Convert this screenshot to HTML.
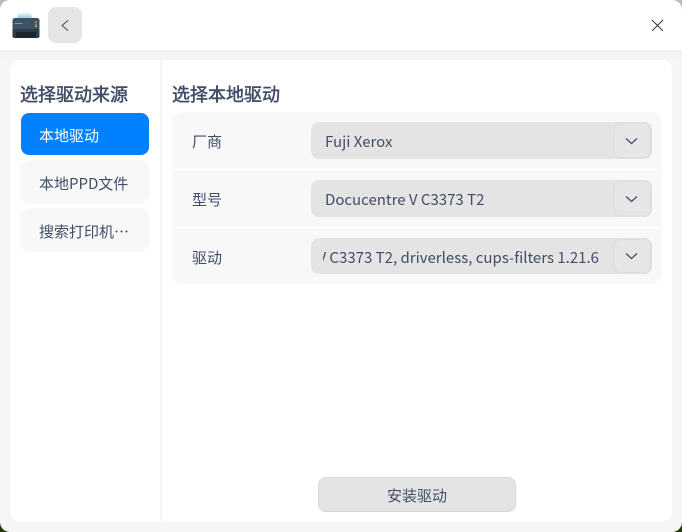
<!DOCTYPE html>
<html><head><meta charset="utf-8">
<style>
*{box-sizing:border-box;margin:0;padding:0}
html,body{width:682px;height:532px;overflow:hidden;background:#fff}
body{position:relative;font-family:"Noto Sans CJK SC","Liberation Sans",sans-serif;color:#414d68;font-size:15px}
.a{position:absolute}
.t{position:absolute;white-space:nowrap;line-height:22px}
.h{font-size:18px;line-height:24px;-webkit-text-stroke:.5px #414d68}
#win{left:0;top:0;width:682px;height:532px;border-radius:10px;background:#f6f6f6;overflow:hidden}
#bar{left:0;top:0;width:682px;height:50px;background:#fff}
#panel{left:10px;top:60px;width:662px;height:462px;border-radius:10px;background:#fff}
.combo{left:311px;width:341px;background:#e4e4e4;border-radius:8px}
.cb{left:613px;width:39px;background:#e6e6e6;border:2px solid #dfdfdf;border-radius:8px}
</style></head><body>
<div class="a" style="left:0;top:0;width:14px;height:14px;background:#b9b9b9"></div>
<div class="a" style="right:0;top:0;width:14px;height:14px;background:#b9b9b9"></div>
<div class="a" style="left:0;bottom:0;width:14px;height:14px;background:#26380c"></div>
<div class="a" style="right:0;bottom:0;width:14px;height:14px;background:#26380c"></div>
<div class="a" id="win">
  <div class="a" id="bar"></div>
  <div class="a" style="left:0;top:50px;width:682px;height:10px;background:linear-gradient(#f1f1f1,#f6f6f6)"></div>
  <div class="a" id="panel"></div>
  <div class="a" style="left:160px;top:60px;width:2px;height:462px;background:#f6f6f6"></div>

  <svg class="a" style="left:12px;top:12px" width="28" height="27" viewBox="0 0 28 27">
    <path d="M6 1h13l1 6H5z" fill="#a9d4ec"/>
    <path d="M6 1h13l.4 2.500H5.600z" fill="#dcedf6"/>
    <rect x="0.5" y="6" width="27" height="20" rx="2.500" fill="#3b5364"/>
    <rect x="0.5" y="17" width="27" height="9" rx="2" fill="#2a3d4a"/>
    <rect x="4" y="20" width="20" height="6" fill="#1a2730"/>
    <rect x="2.500" y="11" width="8" height="1" fill="#8196a3"/>
    <rect x="23" y="9" width="2" height="2" fill="#d9534f"/>
    <rect x="23" y="11.500" width="2" height="1.500" fill="#4ca64c"/>
    <rect x="23" y="13.500" width="2" height="1.500" fill="#e0b040"/>
  </svg>

  <div class="a" style="left:48px;top:7px;width:34px;height:36px;background:#e5e5e5;border-radius:8px"></div>
  <svg class="a" style="left:48px;top:8px" width="34" height="35" viewBox="0 0 34 35">
    <path d="M20 12.500L14 17.500L20 22.500" fill="none" stroke="#414d68" stroke-width="1.100"/>
  </svg>
  <svg class="a" style="left:651px;top:19px" width="13" height="13" viewBox="0 0 13 13" shape-rendering="crispEdges">
    <path d="M1 1L12 12M12 1L1 12" fill="none" stroke="#343f5a" stroke-width="1"/>
  </svg>

  <div class="t h" style="left:20px;top:82px">选择驱动来源</div>
  <div class="a" style="left:21px;top:113px;width:128px;height:42px;background:#0081ff;border-radius:8px"></div>
  <div class="t" style="left:39px;top:125px;color:#fff">本地驱动</div>
  <div class="a" style="left:20px;top:160px;width:130px;height:44px;background:#f8f8f8;border-radius:10px"></div>
  <div class="t" style="left:39px;top:173px">本地PPD文件</div>
  <div class="a" style="left:20px;top:208px;width:130px;height:44px;background:#f8f8f8;border-radius:10px"></div>
  <div class="t" style="left:39px;top:221px">搜索打印机…</div>

  <div class="t h" style="left:172px;top:82px">选择本地驱动</div>
  <div class="a" style="left:172px;top:112px;width:490px;height:172px;background:#f8f8f8;border-radius:10px"></div>
  <div class="a" style="left:172px;top:169px;width:490px;height:1px;background:#fff"></div>
  <div class="a" style="left:172px;top:227px;width:490px;height:1px;background:#fff"></div>

  <div class="t" style="left:192px;top:131px">厂商</div>
  <div class="t" style="left:192px;top:189px">型号</div>
  <div class="t" style="left:192px;top:247px">驱动</div>

  <div class="a combo" style="top:122px;height:37px"></div>
  <div class="a combo" style="top:180px;height:37px"></div>
  <div class="a combo" style="top:238px;height:36px"></div>

  <div class="t" style="left:325px;top:131px">Fuji Xerox</div>
  <div class="t" style="left:325px;top:189px">Docucentre V C3373 T2</div>
  <div class="a" style="left:323px;top:238px;width:288px;height:36px;overflow:hidden">
    <div class="t" style="right:12px;top:9px">Docucentre V C3373 T2, driverless, cups-filters 1.21.6</div>
  </div>

  <div class="a cb" style="top:122px;height:37px"></div>
  <div class="a cb" style="top:180px;height:37px"></div>
  <div class="a cb" style="top:238px;height:36px"></div>
  <svg class="a" style="left:625px;top:137px" width="13" height="8" viewBox="0 0 13 8"><path d="M1 1.500L6.500 6.500L12 1.500" fill="none" stroke="#414d68" stroke-width="1.300"/></svg>
  <svg class="a" style="left:625px;top:195px" width="13" height="8" viewBox="0 0 13 8"><path d="M1 1.500L6.500 6.500L12 1.500" fill="none" stroke="#414d68" stroke-width="1.300"/></svg>
  <svg class="a" style="left:625px;top:252px" width="13" height="8" viewBox="0 0 13 8"><path d="M1 1.500L6.500 6.500L12 1.500" fill="none" stroke="#414d68" stroke-width="1.300"/></svg>

  <div class="a" style="left:318px;top:477px;width:198px;height:35px;background:#e4e4e4;border:1px solid #d9d9d9;border-radius:8px"></div>
  <div class="t" style="left:387px;top:485px">安装驱动</div>
</div>
</body></html>
